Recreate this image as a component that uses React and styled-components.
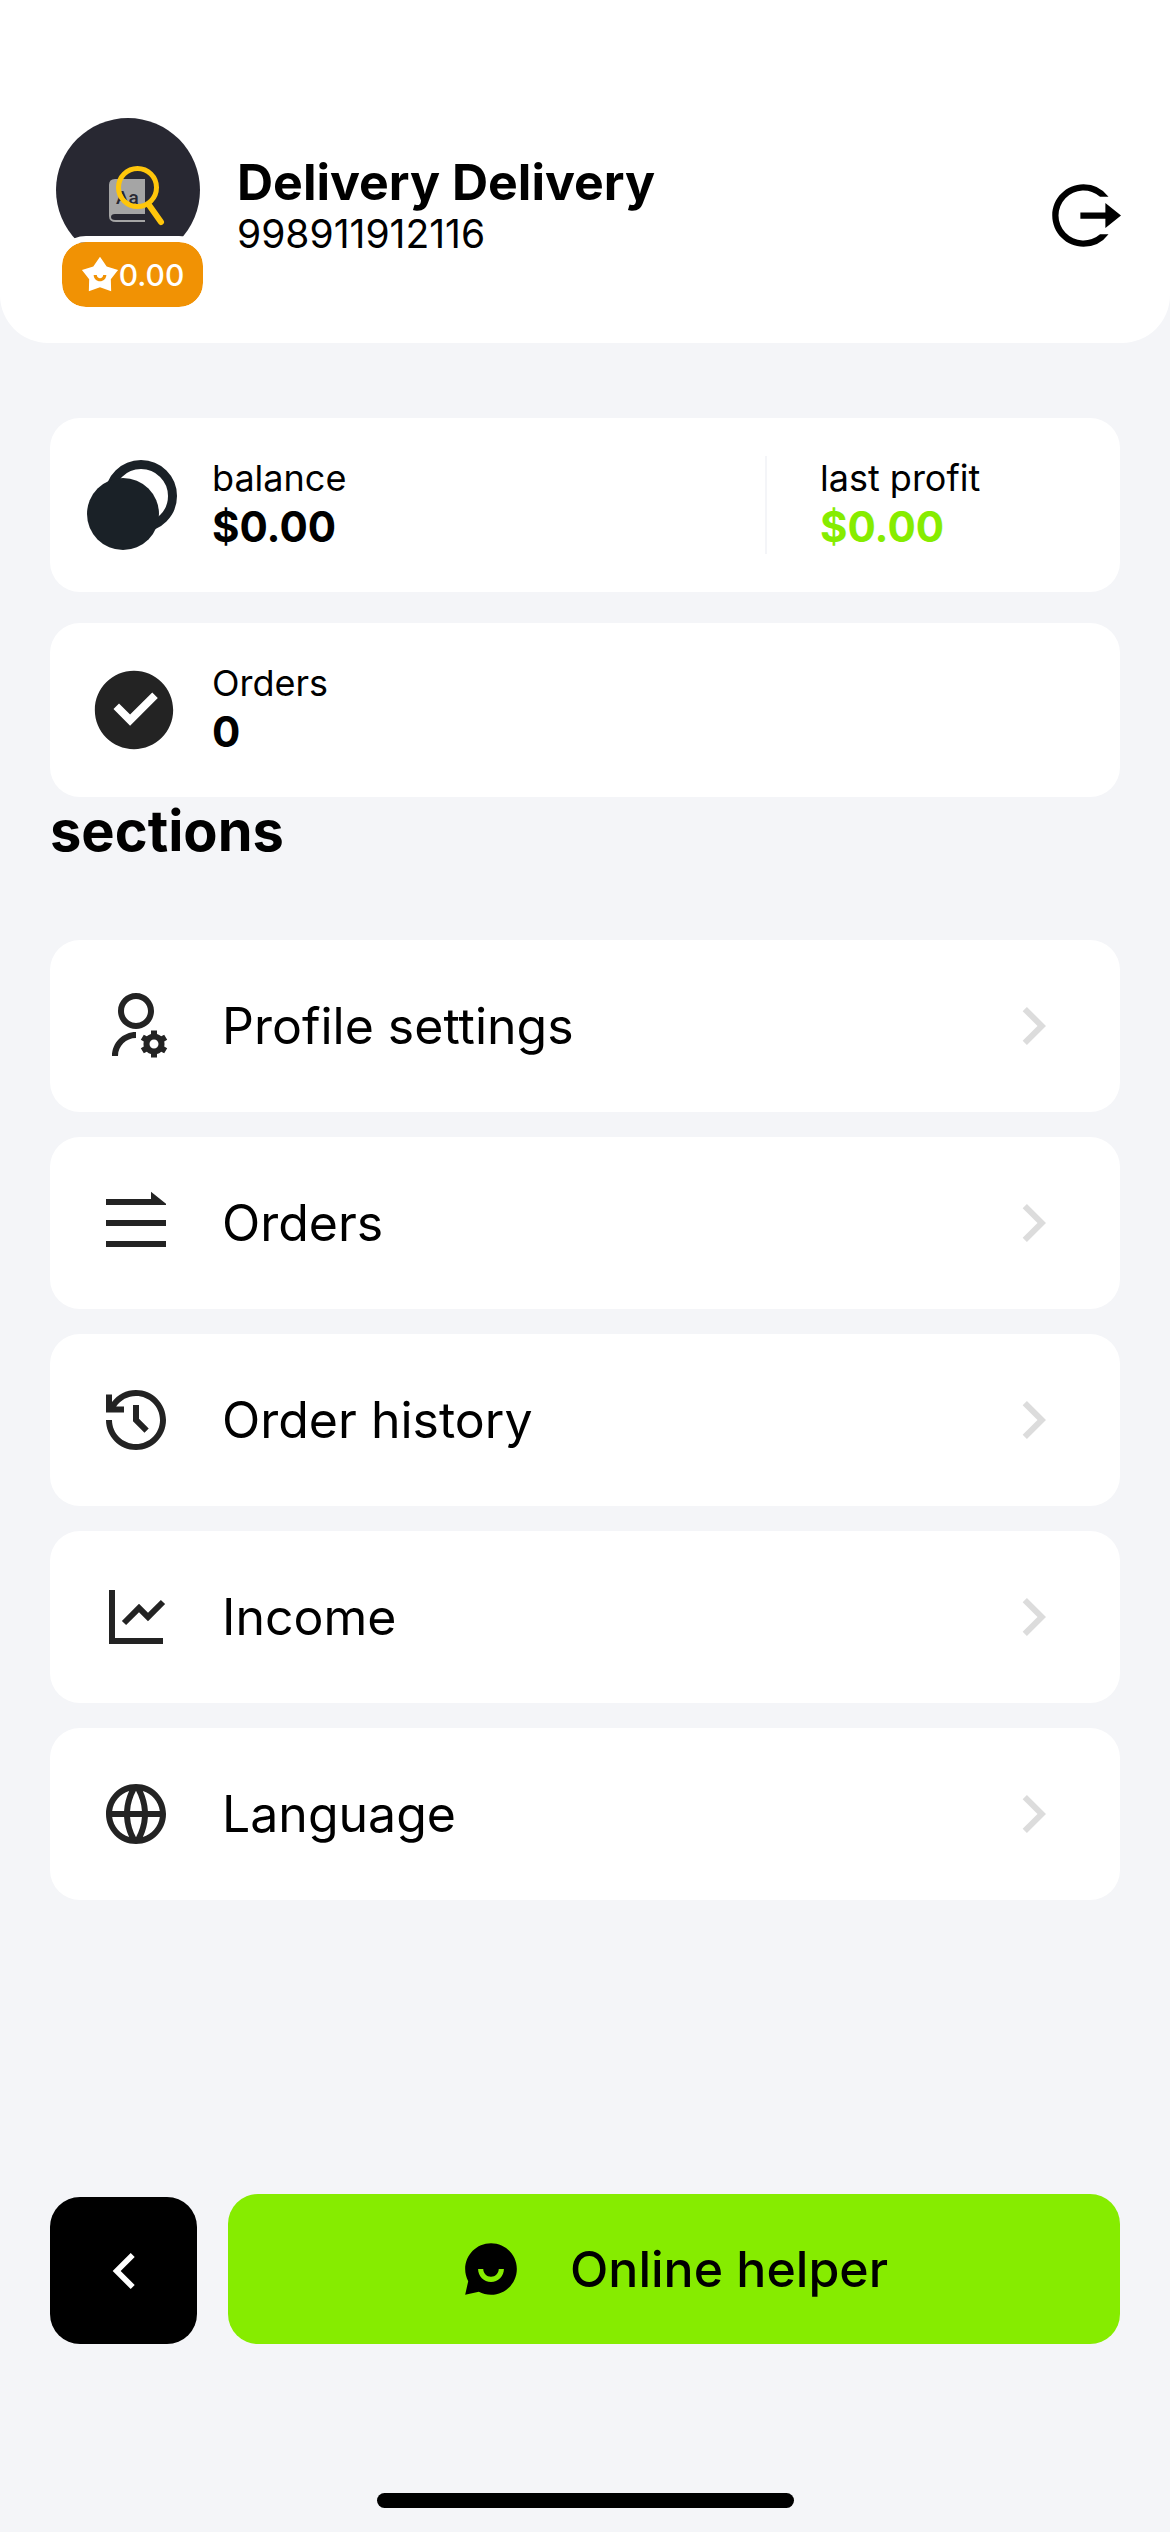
import styled, { createGlobalStyle } from "styled-components";
import {
  RiArrowLeftSLine,
  RiArrowRightSLine,
  RiChatSmile2Fill,
  RiCheckboxCircleFill,
  RiGlobalLine,
  RiHistoryLine,
  RiLineChartLine,
  RiStarSmileFill,
  RiUserSettingsLine,
} from "react-icons/ri";

const GlobalStyle = createGlobalStyle`
  * {
    box-sizing: border-box;
  }

  body {
    margin: 0;
    background-color: #f4f5f8;
    color: #000;
    font-family: Inter, "Liberation Sans", sans-serif;
  }

  button {
    border: none;
    padding: 0;
    font-family: inherit;
    cursor: pointer;
  }

  svg {
    display: block;
    flex-shrink: 0;
  }
`;

const Page = styled.div`
  display: flex;
  flex-direction: column;
  min-height: 100vh;
`;

const Header = styled.header`
  display: flex;
  align-items: center;
  gap: 28px;
  padding: 118px 49px 30px 56px;
  background-color: #fff;
  border-radius: 0 0 48px 48px;
`;

const AvatarBox = styled.div`
  width: 153px;
`;

const Rating = styled.div`
  position: relative;
  display: flex;
  align-items: center;
  justify-content: center;
  height: 77px;
  margin-top: -26px;
  border: 6px solid #fff;
  border-radius: 30px;
  background-color: #f19204;
  background-clip: padding-box;
  color: #fff;
  font-size: 30px;
  font-weight: 500;
`;

const UserInfo = styled.div`
  flex: 1;
  padding-bottom: 24px;
`;

const UserName = styled.h1`
  margin: 0;
  font-size: 50px;
  line-height: 60px;
  font-weight: 700;
`;

const Phone = styled.p`
  margin: 0;
  font-size: 39px;
  line-height: 44px;
`;

const LogoutButton = styled.button`
  background: none;
  color: #000;
`;

const Main = styled.main`
  padding: 75px 50px;
`;

const Stats = styled.div`
  display: flex;
  flex-direction: column;
  gap: 31px;
`;

const StatCard = styled.section`
  display: flex;
  align-items: center;
  padding: 38px 37px;
  border-radius: 30px;
  background-color: #fff;
`;

const StatIcon = styled.div`
  width: 94px;
  margin-right: 31px;
  color: #232323;
`;

const Stat = styled.div`
  flex: 1;
`;

const ProfitStat = styled.div`
  width: 318px;
  padding-left: 53px;
  border-left: 2px solid #f4f5f8;
`;

const StatLabel = styled.p`
  margin: 0;
  font-size: 36px;
  line-height: 44px;
`;

const StatValue = styled.p`
  margin: 0;
  font-size: 42px;
  line-height: 54px;
  font-weight: 700;
  color: ${({ $green }) => ($green ? "#86ec00" : "#000")};
`;

const Title = styled.h2`
  margin: 0 0 75px;
  font-size: 56px;
  line-height: 68px;
  font-weight: 700;
`;

const Menu = styled.nav`
  display: flex;
  flex-direction: column;
  gap: 25px;
`;

const MenuItem = styled.a`
  display: flex;
  align-items: center;
  padding: 50px;
  border-radius: 30px;
  background-color: #fff;
  color: #232323;
  text-decoration: none;

  .label {
    flex: 1;
    margin-left: 50px;
    color: #000;
    font-size: 50px;
    line-height: 72px;
  }

  .arrow {
    color: #dcdcdc;
  }
`;

const Footer = styled.footer`
  margin-top: auto;
  padding: 0 50px 24px;
`;

const Actions = styled.div`
  display: flex;
  align-items: flex-end;
  gap: 31px;
`;

const BackButton = styled.button`
  display: flex;
  align-items: center;
  justify-content: center;
  width: 147px;
  height: 147px;
  border-radius: 30px;
  background-color: #000;
  color: #fff;
`;

const HelperButton = styled.button`
  display: flex;
  flex: 1;
  align-items: center;
  justify-content: center;
  gap: 48px;
  height: 150px;
  border-radius: 30px;
  background-color: #86ec00;
  color: #000;
  font-size: 50px;
  font-weight: 500;
`;

const HomeIndicator = styled.div`
  width: 417px;
  height: 15px;
  margin: 149px auto 0;
  border-radius: 8px;
  background-color: #000;
`;

function Avatar() {
  return (
    <svg width="144" height="144" viewBox="0 0 144 144">
      <circle cx="72" cy="72" r="72" fill="#282832" />
      <path d="M89 61H59q-6 0-6 6v31q0 6 7 6h29v-2H59q-4 0-4-3t4-3h30z" fill="#a5a5a5" />
      <text x="60" y="86" fontFamily="Roboto, sans-serif" fontSize="19" fontWeight="500" fill="#282832">
        Aa
      </text>
      <circle cx="81.5" cy="69.5" r="19" fill="none" stroke="#ffc60b" strokeWidth="5" />
      <path d="M93 87l12 17" stroke="#ffc60b" strokeWidth="6" strokeLinecap="round" />
    </svg>
  );
}

function LogoutIcon() {
  return (
    <svg width="75" height="75" viewBox="0 0 24 24" fill="currentColor">
      <path d="M20 18h-2.708a8 8 0 1 1 0-12H20a9.985 9.985 0 0 0-8-4C6.477 2 2 6.477 2 12s4.477 10 10 10a9.985 9.985 0 0 0 8-4z" />
      <path d="M19 11V8l5 4-5 4v-3h-8v-2z" />
    </svg>
  );
}

function BalanceIcon() {
  return (
    <svg width="90" height="90" viewBox="0 0 90 90">
      <circle cx="54" cy="36" r="31.5" fill="none" stroke="#1a2127" strokeWidth="9" />
      <circle cx="36" cy="54" r="36" fill="#1a2127" />
    </svg>
  );
}

function OrdersIcon({ size }) {
  return (
    <svg width={size} height={size} viewBox="0 0 24 24" fill="currentColor">
      <path d="M2 4h15V1.6l5 4V6H2zM2 11h20v2H2zM2 18h20v2H2z" />
    </svg>
  );
}

const menuItems = [
  { label: "Profile settings", Icon: RiUserSettingsLine },
  { label: "Orders", Icon: OrdersIcon },
  { label: "Order history", Icon: RiHistoryLine },
  { label: "Income", Icon: RiLineChartLine },
  { label: "Language", Icon: RiGlobalLine },
];

function App() {
  return (
    <Page>
      <GlobalStyle />
      <Header>
        <AvatarBox>
          <Avatar />
          <Rating>
            <RiStarSmileFill size={38} />
            0.00
          </Rating>
        </AvatarBox>
        <UserInfo>
          <UserName>Delivery Delivery</UserName>
          <Phone>998911912116</Phone>
        </UserInfo>
        <LogoutButton aria-label="Log out">
          <LogoutIcon />
        </LogoutButton>
      </Header>

      <Main>
        <Stats>
          <StatCard>
            <StatIcon>
              <BalanceIcon />
            </StatIcon>
            <Stat>
              <StatLabel>balance</StatLabel>
              <StatValue>$0.00</StatValue>
            </Stat>
            <ProfitStat>
              <StatLabel>last profit</StatLabel>
              <StatValue $green>$0.00</StatValue>
            </ProfitStat>
          </StatCard>
          <StatCard>
            <StatIcon>
              <RiCheckboxCircleFill size={94} />
            </StatIcon>
            <Stat>
              <StatLabel>Orders</StatLabel>
              <StatValue>0</StatValue>
            </Stat>
          </StatCard>
        </Stats>

        <Title>sections</Title>
        <Menu>
          {menuItems.map(({ label, Icon }) => (
            <MenuItem key={label} href="#">
              <Icon size={72} />
              <span className="label">{label}</span>
              <RiArrowRightSLine className="arrow" size={72} />
            </MenuItem>
          ))}
        </Menu>
      </Main>

      <Footer>
        <Actions>
          <BackButton aria-label="Back">
            <RiArrowLeftSLine size={68} />
          </BackButton>
          <HelperButton>
            <RiChatSmile2Fill size={62} />
            Online helper
          </HelperButton>
        </Actions>
        <HomeIndicator />
      </Footer>
    </Page>
  );
}

export default App;
